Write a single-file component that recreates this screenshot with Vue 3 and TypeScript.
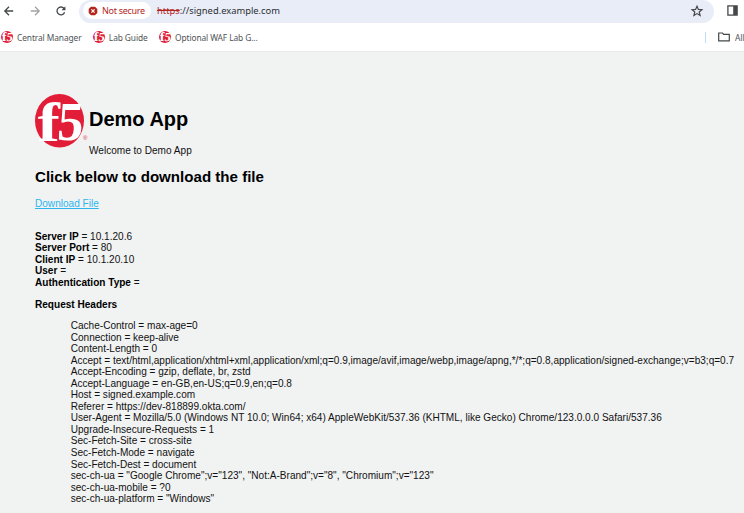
<script setup lang="ts">
interface Entry {
  name: string
  value: string
}

const bookmarks: string[] = ['Central Manager', 'Lab Guide', 'Optional WAF Lab G...']

const connection: Entry[] = [
  { name: 'Server IP', value: '= 10.1.20.6' },
  { name: 'Server Port', value: '= 80' },
  { name: 'Client IP', value: '= 10.1.20.10' },
  { name: 'User', value: '=' },
  { name: 'Authentication Type', value: '=' },
]

const headers: Entry[] = [
  { name: 'Cache-Control', value: 'max-age=0' },
  { name: 'Connection', value: 'keep-alive' },
  { name: 'Content-Length', value: '0' },
  {
    name: 'Accept',
    value:
      'text/html,application/xhtml+xml,application/xml;q=0.9,image/avif,image/webp,image/apng,*/*;q=0.8,application/signed-exchange;v=b3;q=0.7',
  },
  { name: 'Accept-Encoding', value: 'gzip, deflate, br, zstd' },
  { name: 'Accept-Language', value: 'en-GB,en-US;q=0.9,en;q=0.8' },
  { name: 'Host', value: 'signed.example.com' },
  { name: 'Referer', value: 'https://dev-818899.okta.com/' },
  {
    name: 'User-Agent',
    value:
      'Mozilla/5.0 (Windows NT 10.0; Win64; x64) AppleWebKit/537.36 (KHTML, like Gecko) Chrome/123.0.0.0 Safari/537.36',
  },
  { name: 'Upgrade-Insecure-Requests', value: '1' },
  { name: 'Sec-Fetch-Site', value: 'cross-site' },
  { name: 'Sec-Fetch-Mode', value: 'navigate' },
  { name: 'Sec-Fetch-Dest', value: 'document' },
  { name: 'sec-ch-ua', value: '"Google Chrome";v="123", "Not:A-Brand";v="8", "Chromium";v="123"' },
  { name: 'sec-ch-ua-mobile', value: '?0' },
  { name: 'sec-ch-ua-platform', value: '"Windows"' },
]
</script>

<template>
  <div class="window">
    <div class="toolbar">
      <svg class="nav back" viewBox="0 0 12 12"><path d="M10.2 6H2M6 1.8 1.8 6 6 10.2" /></svg>
      <svg class="nav forward" viewBox="0 0 12 12"><path d="M1.8 6H10M6 1.8 10.2 6 6 10.2" /></svg>
      <svg class="nav reload" viewBox="0 0 12 12">
        <path d="M9.6 7.2A3.9 3.9 0 1 1 9 3.5L10 4.6" />
        <path class="solid" d="M10.4 1.3v4H6.5z" />
      </svg>
      <div class="omnibox">
        <div class="chip">
          <svg class="warn" viewBox="0 0 10 10">
            <path class="octagon" d="M3 .7h4L9.3 3v4L7 9.3H3L.7 7V3z" />
            <path class="cross" d="m3.4 3.4 3.2 3.2M6.6 3.4 3.4 6.6" />
          </svg>
          <span>Not secure</span>
        </div>
        <div class="url"><s>https</s>://signed.example.com</div>
        <svg class="star" viewBox="0 0 12 12">
          <path d="m6 1.2 1.4 3.2 3.5.3-2.7 2.3.9 3.5L6 8.6l-3.1 1.9.9-3.5-2.7-2.3 3.5-.3z" />
        </svg>
      </div>
      <svg class="panel" viewBox="0 0 11 11">
        <rect x=".9" y=".9" width="9.2" height="9.2" />
        <path d="M6.2 1h4v9h-4z" />
      </svg>
    </div>

    <div class="bookmarks">
      <div v-for="label in bookmarks" :key="label" class="bookmark">
        <svg class="favicon" viewBox="0 0 54 54">
          <circle cx="27" cy="27" r="27" />
          <text class="f" transform="translate(3 47) scale(1.2 1)">f</text>
          <text class="five" transform="translate(24 46) skewX(-6)">5</text>
        </svg>
        <span>{{ label }}</span>
      </div>
      <div class="all">
        <svg class="folder" viewBox="0 0 12 10"><path d="M.7 8.9V1h3.8l1.2 1.4h5.6v6.5z" /></svg>
        <span>All</span>
      </div>
    </div>

    <main class="page">
      <header class="brand">
        <svg class="logo" viewBox="0 0 54 54">
          <ellipse cx="24.5" cy="26.8" rx="24.5" ry="26.8" />
          <text class="f" transform="translate(2.5 46.5) scale(1.22 1)">f</text>
          <text class="five" transform="translate(21.5 46) skewX(-4) scale(.94 1)">5</text>
          <text class="mark" x="48" y="45.5">®</text>
        </svg>
        <div class="titles">
          <h1>Demo App</h1>
          <p>Welcome to Demo App</p>
        </div>
      </header>
      <h2>Click below to download the file</h2>
      <a class="download">Download File</a>
      <div class="details">
        <div v-for="item in connection" :key="item.name"><b>{{ item.name }}</b> {{ item.value }}</div>
      </div>
      <h3>Request Headers</h3>
      <div class="headers">
        <div v-for="item in headers" :key="item.name">{{ item.name }} = {{ item.value }}</div>
      </div>
    </main>
  </div>
</template>

<style>
body {
  overflow: hidden;
}
</style>

<style scoped>
.window {
  width: 744px;
  height: 513px;
  overflow: hidden;
  display: flex;
  flex-direction: column;
  background: #fff;
  font-family: 'Liberation Sans', Arial, sans-serif;
  white-space: nowrap;
}
svg {
  display: block;
  flex: none;
  overflow: visible;
}
.toolbar {
  height: 23px;
  flex: none;
  display: flex;
  align-items: flex-start;
}
.nav {
  width: 12px;
  height: 12px;
  margin-top: 5px;
  fill: none;
  stroke: #45484b;
  stroke-width: 1.3;
}
.back {
  margin-left: 3px;
}
.forward {
  margin-left: 14px;
  stroke: #a2a4a6;
}
.reload {
  margin-left: 14px;
}
.solid {
  fill: #45484b;
  stroke: none;
}
.omnibox {
  width: 635px;
  height: 23px;
  margin-left: 12px;
  display: flex;
  align-items: center;
  border-radius: 12px;
  background: #e9edf8;
  font-family: 'Noto Sans', sans-serif;
  font-size: 9.35px;
}
.chip {
  width: 68px;
  height: 17px;
  margin: 0 0 2px 4px;
  display: flex;
  align-items: center;
  border-radius: 9px;
  background: #fff;
  color: #b3261e;
  font-size: 9px;
  letter-spacing: -0.3px;
}
.warn {
  width: 10px;
  height: 10px;
  margin: 0 4px 0 5px;
}
.octagon {
  fill: #b3261e;
}
.cross {
  stroke: #fff;
  stroke-width: 1.2;
}
.url {
  margin: 0 0 2px 6px;
  color: #2b2d31;
}
.url s {
  color: #b3261e;
}
.star {
  width: 12px;
  height: 12px;
  margin: 0 11px 2px auto;
  fill: none;
  stroke: #45484b;
  stroke-width: 1.2;
}
.panel {
  width: 11px;
  height: 11px;
  margin: 5px 0 0 13px;
  fill: #45484b;
}
.panel rect {
  fill: none;
  stroke: #45484b;
  stroke-width: 1.3;
}
.bookmarks {
  height: 29px;
  flex: none;
  display: flex;
  align-items: center;
  gap: 11.3px;
  padding-left: 1px;
  border-bottom: 1px solid #e8e9ea;
  box-sizing: border-box;
  color: #505357;
  font-family: 'Noto Sans', sans-serif;
  font-size: 8.4px;
  letter-spacing: -0.1px;
}
.bookmark {
  display: flex;
  align-items: center;
  gap: 4px;
}
.favicon {
  width: 12px;
  height: 12px;
}
.favicon circle,
.logo ellipse {
  fill: #e21d38;
}
.f,
.five {
  fill: #fff;
  font-family: 'Liberation Serif', serif;
  font-weight: bold;
  font-size: 55px;
}
.mark {
  fill: #e21d38;
  font-size: 6px;
}
.all {
  margin-left: auto;
  height: 11px;
  padding-left: 12px;
  display: flex;
  align-items: center;
  gap: 5px;
  width: 26px;
  border-left: 1px solid #c4dafa;
}
.folder {
  width: 12px;
  height: 10px;
  fill: none;
  stroke: #45484b;
  stroke-width: 1.2;
}
.page {
  flex: 1;
  padding: 42px 0 0 35px;
  background: #f1f3f3;
  color: #111;
  font-size: 10.07px;
  line-height: 11.54px;
}
.brand {
  display: flex;
  height: 64px;
}
.logo {
  width: 54px;
  height: 54px;
}
h1,
h2,
h3,
p {
  margin: 0;
}
h1 {
  margin-top: 13px;
  font-size: 20px;
  line-height: 24px;
  color: #000;
}
p {
  margin-top: 14px;
}
h2 {
  margin-top: 10px;
  font-size: 15.1px;
  line-height: 18px;
  color: #000;
}
.download {
  display: block;
  width: max-content;
  margin-top: 12px;
  color: #2eb5ee;
  text-decoration: underline;
}
.details {
  margin-top: 21px;
}
.details b {
  color: #000;
}
h3 {
  margin-top: 10.5px;
  font-size: 10.07px;
  line-height: 11.54px;
  color: #000;
}
.headers {
  margin-top: 9.7px;
  padding-left: 35.7px;
}
</style>
